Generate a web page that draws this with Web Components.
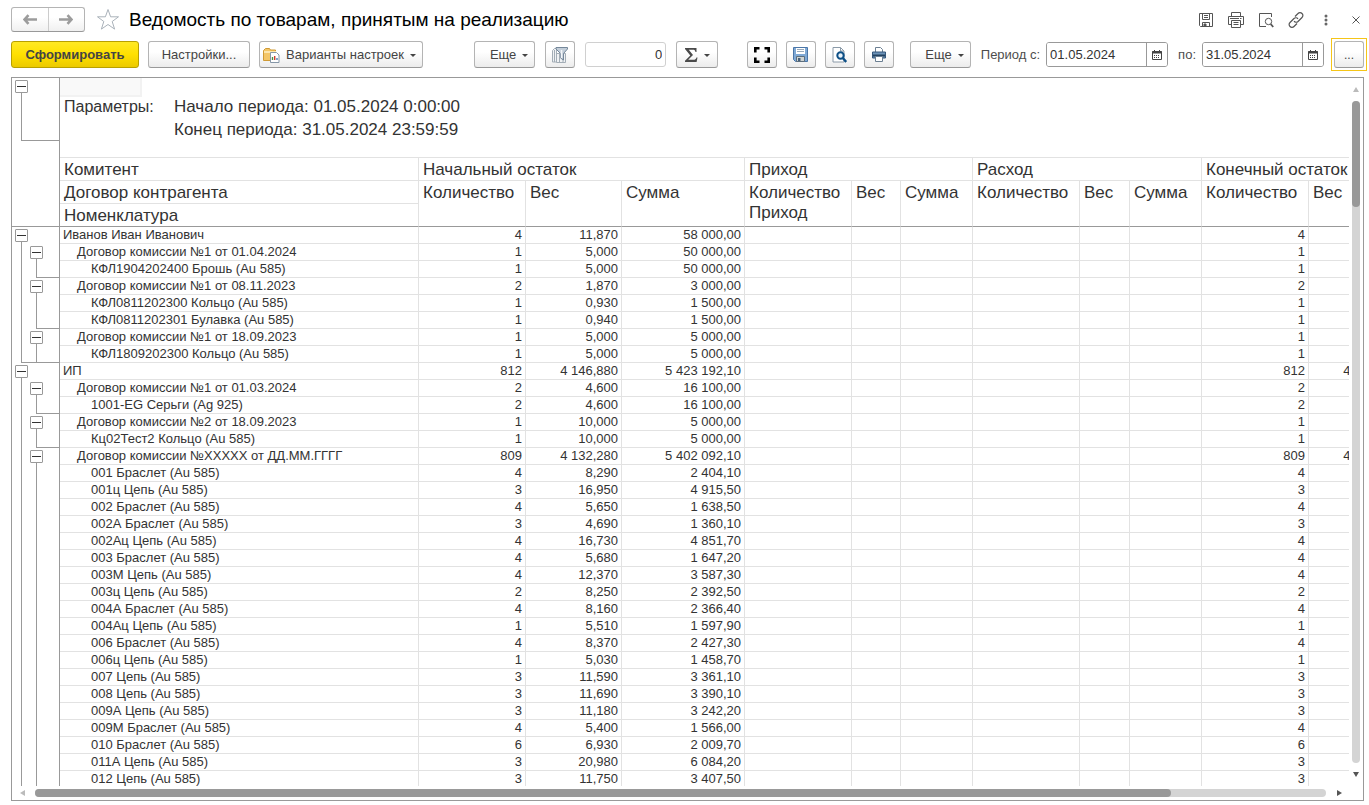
<!DOCTYPE html>
<html lang="ru">
<head>
<meta charset="utf-8">
<title>Ведомость по товарам, принятым на реализацию</title>
<style>
  html, body { margin: 0; height: 100%; background: #fff; }
  body { font: 13px/16px "Liberation Sans", Arial, sans-serif; color: #333; overflow: hidden; }
</style>
</head>
<body>
<report-app></report-app>

<script>
const ICONS = {
  back: '<svg width="14" height="11" viewBox="0 0 14 11"><path d="M5.500 1.200 1.500 5.500l4 4.300M2 5.500H14" fill="none" stroke="#9c9c9c" stroke-width="2.600"/></svg>',
  forward: '<svg width="14" height="11" viewBox="0 0 14 11"><path d="M8.500 1.200l4 4.300-4 4.300M12 5.500H0" fill="none" stroke="#9c9c9c" stroke-width="2.600"/></svg>',
  star: '<svg width="24" height="23" viewBox="0 0 24 23"><path d="M12 1.500l2.600 7.300h7.900l-6.300 4.700 2.400 7.600L12 16.500l-6.600 4.600 2.400-7.600L1.500 8.800h7.900z" fill="#fff" stroke="#aab2ba"/></svg>',
  save: '<svg width="16" height="16" viewBox="0 0 16 16" fill="none" stroke="#555"><path d="M1.500 1.500h13v13h-12l-1-1z"/><path d="M4.500 1.500v6h7v-6M6 3.500h4M6 5.500h4M4.500 14.500v-4h7v4"/><path d="M6 12h2v2H6z" fill="#555"/></svg>',
  print: '<svg width="16" height="16" viewBox="0 0 16 16" fill="none" stroke="#555"><path d="M3.500 4.500v-4h9v4M3.500 12.500h-3v-8h15v8h-3M2 6.500h9M12 6.500h1.500"/><path d="M3.500 8.500h9v7h-9zM5.500 10.500h5M5.500 12.500h5"/></svg>',
  preview: '<svg width="16" height="16" viewBox="0 0 16 16" fill="none" stroke="#555"><path d="M13.500 5V1.500h-12v13H8"/><circle cx="10.500" cy="9.500" r="3.200"/><path d="M12.700 12l2.500 3" stroke-width="1.800"/></svg>',
  link: '<svg width="16" height="16" viewBox="0 0 16 16" fill="none" stroke="#555" stroke-width="1.200"><path d="M7 4.500l3-3a2.700 2.700 0 0 1 4 0 2.700 2.700 0 0 1 0 4l-4 4a2.700 2.700 0 0 1-4-.3"/><path d="M9 11.500l-3 3a2.700 2.700 0 0 1-4 0 2.700 2.700 0 0 1 0-4l4-4a2.700 2.700 0 0 1 4 .3"/></svg>',
  more: '<svg width="4" height="12" viewBox="0 0 4 12" fill="#666"><circle cx="2" cy="2" r="1.500"/><circle cx="2" cy="6" r="1.500"/><circle cx="2" cy="10" r="1.500"/></svg>',
  close: '<svg width="8" height="8" viewBox="0 0 8 8"><path d="M.5.5l7 7M7.500.5l-7 7" stroke="#555"/></svg>',
  variants: '<svg width="17" height="16" viewBox="0 0 17 16"><path d="M.5 13.500v-10l2-2h4l1 1.500h5v10.500z" fill="#f4c667" stroke="#cf9a35"/><path d="M1 5h12" stroke="#fce6ae" stroke-width="2"/><path d="M7.500 5.500h6l2.500 2.500v7.500H7.500z" fill="#fff" stroke="#8697a8"/><path d="M9.500 13v-3" stroke="#4a8f3e" stroke-width="1.400"/><path d="M11.700 13V9" stroke="#d13b2b" stroke-width="1.400"/><path d="M14 13v-2" stroke="#4a78b5" stroke-width="1.400"/></svg>',
  filter: '<svg width="16" height="16" viewBox="0 0 16 16"><path d="M.5 3.500l2-2h2v13.500h-4zM4.500 6.500h9v9h-9zM7.500 7v8M11 7v8M2.500 3v12" fill="#f0f2f4" stroke="#a3adb6"/><path d="M4 .5h11.500v1.500l-4 4.500v6.500l-3-2V6.500L4 2z" fill="#c3ced9" stroke="#74879a"/><path d="M9.500 3v8" stroke="#f4f7fa" stroke-width="1.500"/></svg>',
  sigma: '<svg width="13" height="14" viewBox="0 0 13 14"><path d="M0 0h11.500v4h-1c-.3-1.700-.9-2.300-2.800-2.300H3.800L8 7l-4.800 4.800h5c2 0 2.800-.7 3.300-2.300h1L11.600 14H0v-1.200L5.300 7.400 0 1z" fill="#4a4a4a"/></svg>',
  expand: '<svg width="16" height="16" viewBox="0 0 16 16"><path d="M1.300 5.500V1.300h4.200M10.500 1.300h4.200v4.200M14.700 10.500v4.200h-4.200M5.500 14.700H1.300v-4.200" fill="none" stroke="#000" stroke-width="2.600"/></svg>',
  disk: '<svg width="15" height="15" viewBox="0 0 15 15"><path d="M.5.5h14v14h-12l-2-2z" fill="#7fa9d6" stroke="#4a76a8"/><path d="M3 1h9v6H3z" fill="#fff"/><path d="M4 2.500h7M4 4.500h7" stroke="#9ab"/><path d="M3.500 9.500h8v5h-8z" fill="#cfd3d2" stroke="#5c6e7d"/><path d="M5 11h2.500v3H5z" fill="#47617c"/></svg>',
  lens: '<svg width="15" height="16" viewBox="0 0 15 16"><path d="M1 .5h7.500L12 4v11H1z" fill="#fff" stroke="#8b9aa8"/><path d="M8.500.5V4H12" fill="none" stroke="#8b9aa8"/><circle cx="8.500" cy="8.500" r="3.200" fill="#e8f2fa" stroke="#0d4f86" stroke-width="2"/><path d="M10.800 11l3.400 4" stroke="#0d4f86" stroke-width="2.400"/></svg>',
  printer: '<svg width="14" height="15" viewBox="0 0 14 15"><path d="M3.500 5V.5h5l2 2V5" fill="#fff" stroke="#6b7f92"/><path d="M.5 5h13v6H.5z" fill="#6d93b8" stroke="#34567a"/><path d="M1 8.500h12" stroke="#23415f" stroke-width="2"/><path d="M3.500 9.500h7v5h-7z" fill="#fff" stroke="#6b7f92"/></svg>',
  calendar: '<svg width="10" height="10" viewBox="0 0 10 10"><path d="M.5 1.500h9v8h-9z" fill="#fff" stroke="#444"/><path d="M0 2.500h10" stroke="#444" stroke-width="2"/><path d="M2.500 0v2M7.500 0v2" stroke="#444"/><path d="M2 5.500h6M2 7.500h6" stroke="#444" stroke-dasharray="1 1"/></svg>'
};

function define(name, css, html) {
  customElements.define(name, class extends HTMLElement {
    constructor() {
      super();
      this.attachShadow({ mode: 'open' }).innerHTML =
        '<style>*{box-sizing:border-box}' + css + '</style>' +
        (typeof html === 'function' ? html(this) : html);
    }
  });
}

/* Icon picked by name from the set above */
define('ui-icon', ':host{display:inline-flex;flex:none}svg{display:block}',
  el => ICONS[el.getAttribute('name')] || '');

/* Push button; "caret" adds the drop-down mark, "primary" the yellow fill */
define('tool-button', `
  :host { display: block; flex: none; height: 27px; width: 30px; }
  button { display: flex; align-items: center; justify-content: center; width: 100%; height: 100%; margin: 0; padding: 0;
    font: inherit; color: #444; background: linear-gradient(#fff 40%, #ececec); border: 1px solid #b4b4b4;
    border-bottom-color: #999; border-radius: 3px; white-space: nowrap; }
  :host([primary]) button { font-weight: bold; background: linear-gradient(#ffe924, #ffe000 50%, #ecca00); border-color: #b8a000; }
  :host([caret]) button { gap: 6px; }
  :host([wide]) button { justify-content: flex-end; padding-right: 6px; }
  .caret { border: 3px solid transparent; border-top-color: #444; border-bottom: 0; margin-top: 2px; }
`, el => `<button type="button" aria-label="${el.getAttribute('label') || ''}"><slot></slot>${el.hasAttribute('caret') ? '<span class="caret"></span>' : ''}</button>`
    .replace(' aria-label=""', ''));

/* Labelled date box with a calendar button */
define('date-field', `
  :host { display: flex; align-items: center; flex: none; gap: 6px; white-space: nowrap; color: #4d4d4d; }
  .box { display: flex; width: 122px; height: 25px; border: 1px solid #999; border-radius: 3px; overflow: hidden; }
  input { flex: 1; min-width: 0; border: 0; padding: 0 3px; font: inherit; color: #333; background: #fff; outline: 0; }
  button { width: 21px; border: 0; border-left: 1px solid #999; background: #fff; padding: 0; display: flex; align-items: center; justify-content: center; }
`, el => `<label for="d">${el.getAttribute('label')}</label>
  <div class="box"><input id="d" type="text" value="${el.getAttribute('value')}"><button type="button" aria-label="Календарь"><ui-icon name="calendar"></ui-icon></button></div>`);

define('title-bar', `
  :host { display: flex; align-items: center; height: 25px; }
  .nav { display: flex; width: 74px; height: 25px; border: 1px solid #b4b4b4; border-bottom-color: #999; border-radius: 3px; background: linear-gradient(#fff 40%, #f0f0f0); }
  .nav button { flex: 1; border: 0; background: none; padding: 0; display: flex; align-items: center; justify-content: center; }
  .nav button + button { border-left: 1px solid #ccc; }
  .icon { border: 0; background: none; padding: 0; display: flex; align-items: center; justify-content: center; width: 30px; height: 24px; }
  .star { width: 24px; margin: 0 9px 0 11px; }
  h1 { flex: 1; margin: 0; font-size: 19px; line-height: 24px; font-weight: normal; color: #000; white-space: nowrap; }
  .tools { display: flex; margin-right: -7px; }
`, `<div class="nav"><button type="button" aria-label="Назад"><ui-icon name="back"></ui-icon></button><button type="button" aria-label="Вперед"><ui-icon name="forward"></ui-icon></button></div>
  <button type="button" class="icon star" aria-label="Избранное"><ui-icon name="star"></ui-icon></button>
  <h1><slot></slot></h1>
  <div class="tools">${[['save', 'Сохранить'], ['print', 'Печать'], ['preview', 'Просмотр'], ['link', 'Ссылка'], ['more', 'Меню'], ['close', 'Закрыть']]
    .map(([n, l]) => `<button type="button" class="icon" aria-label="${l}"><ui-icon name="${n}"></ui-icon></button>`).join('')}</div>`);

define('report-toolbar', `
  :host { display: flex; align-items: center; height: 33px; margin-right: -3px; }
  .group { display: flex; align-items: center; gap: 9px; flex: none; }
  .mid { gap: 10px; }
  .s1 { flex: 52 0 0; } .s2 { flex: 29 0 0; } .s3 { flex: 16 0 0; }
  .make { width: 128px; } .set { width: 102px; } .var { width: 164px; } .more { width: 61px; } .sum { width: 42px; }
  input { width: 81px; height: 25px; border: 1px solid #d0d0d0; border-radius: 3px; padding: 0 3px; text-align: right; font: inherit; color: #333; }
  .focus { padding: 2px; border: 1px solid #f5c518; margin-left: -3px; }
  .focus tool-button { font-size: 12px; }
`, `<div class="group">
    <tool-button class="make" primary>Сформировать</tool-button>
    <tool-button class="set">Настройки...</tool-button>
    <tool-button class="var" caret wide><ui-icon name="variants"></ui-icon>Варианты настроек</tool-button>
  </div>
  <div class="s1"></div>
  <div class="group mid">
    <tool-button class="more" caret wide>Еще</tool-button>
    <tool-button label="Отбор"><ui-icon name="filter"></ui-icon></tool-button>
    <input type="text" value="0" aria-label="Значение">
    <tool-button class="sum" caret label="Сумма"><ui-icon name="sigma"></ui-icon></tool-button>
  </div>
  <div class="s2"></div>
  <div class="group">
    <tool-button label="Во весь экран"><ui-icon name="expand"></ui-icon></tool-button>
    <tool-button label="Сохранить"><ui-icon name="disk"></ui-icon></tool-button>
    <tool-button label="Предпросмотр"><ui-icon name="lens"></ui-icon></tool-button>
    <tool-button label="Печать"><ui-icon name="printer"></ui-icon></tool-button>
  </div>
  <div class="s3"></div>
  <div class="group mid">
    <tool-button class="more" caret wide>Еще</tool-button>
    <date-field label="Период с:" value="01.05.2024"></date-field>
    <date-field label="по:" value="31.05.2024"></date-field>
    <div class="focus"><tool-button>...</tool-button></div>
  </div>`);

/* Scroll bar with end arrows; "vertical" turns it */
define('scroll-bar', `
  :host { display: flex; align-items: center; padding: 0 21px 0 8px; height: 13px; }
  .track { flex: 1; height: 8px; border-radius: 4px; background: #d4d4d4; margin: 0 11px 0 10px; }
  .thumb { width: 88%; height: 8px; border-radius: 4px; background: #999; }
  .a { border: 3px solid transparent; border-left: 0; border-right: 5px solid #bbb; }
  .b { border: 3px solid transparent; border-right: 0; border-left: 5px solid #555; }
  :host([vertical]) { flex-direction: column; width: 14px; height: auto; padding: 9px 0 9px; }
  :host([vertical]) .track { width: 8px; height: auto; margin: 9px 0; }
  :host([vertical]) .thumb { width: 8px; height: 16%; }
  :host([vertical]) .a { border: 3px solid transparent; border-top: 0; border-bottom: 5px solid #bbb; }
  :host([vertical]) .b { border: 3px solid transparent; border-bottom: 0; border-top: 5px solid #555; }
`, '<span class="a"></span><div class="track"><div class="thumb"></div></div><span class="b"></span>');

/* level | name | quantity | weight | sum | outline marks: b = box, l = line, e = end of group, - = nothing */
const ROWS = `0|Иванов Иван Иванович|4|11,870|58 000,00|b-
1|Договор комиссии №1 от 01.04.2024|1|5,000|50 000,00|lb
2|КФЛ1904202400 Брошь (Au 585)|1|5,000|50 000,00|le
1|Договор комиссии №1 от 08.11.2023|2|1,870|3 000,00|lb
2|КФЛ0811202300 Кольцо (Au 585)|1|0,930|1 500,00|ll
2|КФЛ0811202301 Булавка (Au 585)|1|0,940|1 500,00|le
1|Договор комиссии №1 от 18.09.2023|1|5,000|5 000,00|lb
2|КФЛ1809202300 Кольцо (Au 585)|1|5,000|5 000,00|ee
0|ИП|812|4 146,880|5 423 192,10|b-
1|Договор комиссии №1 от 01.03.2024|2|4,600|16 100,00|lb
2|1001-EG Серьги (Ag 925)|2|4,600|16 100,00|le
1|Договор комиссии №2 от 18.09.2023|1|10,000|5 000,00|lb
2|Кц02Тест2 Кольцо (Au 585)|1|10,000|5 000,00|le
1|Договор комиссии №XXXXX от ДД.ММ.ГГГГ|809|4 132,280|5 402 092,10|lb
2|001 Браслет (Au 585)|4|8,290|2 404,10|ll
2|001ц Цепь (Au 585)|3|16,950|4 915,50|ll
2|002 Браслет (Au 585)|4|5,650|1 638,50|ll
2|002А Браслет (Au 585)|3|4,690|1 360,10|ll
2|002Ац Цепь (Au 585)|4|16,730|4 851,70|ll
2|003 Браслет (Au 585)|4|5,680|1 647,20|ll
2|003М Цепь (Au 585)|4|12,370|3 587,30|ll
2|003ц Цепь (Au 585)|2|8,250|2 392,50|ll
2|004А Браслет (Au 585)|4|8,160|2 366,40|ll
2|004Ац Цепь (Au 585)|1|5,510|1 597,90|ll
2|006 Браслет (Au 585)|4|8,370|2 427,30|ll
2|006ц Цепь (Au 585)|1|5,030|1 458,70|ll
2|007 Цепь (Au 585)|3|11,590|3 361,10|ll
2|008 Цепь (Au 585)|3|11,690|3 390,10|ll
2|009А Цепь (Au 585)|3|11,180|3 242,20|ll
2|009М Браслет (Au 585)|4|5,400|1 566,00|ll
2|010 Браслет (Au 585)|6|6,930|2 009,70|ll
2|011А Цепь (Au 585)|3|20,980|6 084,20|ll
2|012 Цепь (Au 585)|3|11,750|3 407,50|ll`.split('\n').map(r => r.split('|'));

/* Grouping marks in the left margin of a row */
define('outline-marks', `
  :host { display: flex; height: 100%; padding-left: 3px; }
  span { display: flex; flex-direction: column; width: 15px; flex: none; }
  button { width: 13px; height: 13px; flex: none; margin: 2px 0 0; padding: 0; border: 1px solid #999; border-radius: 1px; background: #fff; display: flex; align-items: center; justify-content: center; }
  button::before { content: ""; width: 9px; height: 1px; background: #333; }
  i { flex: 1; margin-left: 6px; border-left: 1px solid #999; }
  .e { border-bottom: 1px solid #999; width: 38px; }
  span + span .e { width: 23px; }
`, el => [...el.getAttribute('marks')].map(m => '<span>' + ({
    b: '<button type="button" aria-label="Свернуть"></button><i></i>', l: '<i></i>', e: '<i class="e"></i>', '-': '' })[m] + '</span>').join(''));

const WIDTHS = [48, 359, 107, 96, 123, 107, 49, 72, 107, 50, 72, 107, 96];
const mark = m => `<td class="g"><outline-marks marks="${m}"></outline-marks></td>`;
const row = ([lv, name, q, w, s, m]) => `<tr>${mark(m)}<td class="n${lv}">${name}</td>` +
  `<td>${q}</td><td>${w}</td><td>${s}</td>${'<td></td>'.repeat(6)}<td>${q}</td><td>${w.length > 7 ? w : ''}</td></tr>`;

define('report-table', `
  :host { display: block; overflow: hidden; min-width: 0; min-height: 0; }
  table { table-layout: fixed; border-collapse: separate; border-spacing: 0; width: ${WIDTHS.reduce((a, b) => a + b)}px; }
  td, th { padding: 0 3px; overflow: hidden; white-space: nowrap; font-weight: normal; border: 0 solid #e2e2e2; }
  tr { height: 17px; }
  .g { padding: 0; border-right: 1px solid #999; height: 17px; overflow: visible; }
  tbody td { height: 17px; line-height: 16px; border-width: 0 1px 1px 0; text-align: right; }
  tbody .g { border-bottom: 0; border-color: #999; }
  tbody .n0, tbody .n1, tbody .n2 { text-align: left; }
  .n1 { padding-left: 17px; }
  .n2 { padding-left: 31px; }
  thead { font-size: 17px; }
  thead td, thead th { text-align: left; vertical-align: top; padding: 0 4px; }
  .big td, .big th { height: 23px; line-height: 20px; padding-top: 2px; }
  thead .g, .big .g { padding: 0; }
  .h th { border-width: 0 1px 1px 0; }
  .rule td { border-bottom: 1px solid #e2e2e2; }
  thead .rule .g { border-bottom: 0; }
  thead .end { border-bottom: 1px solid #999; }
  thead .corner { height: 17px; line-height: 0; overflow: visible; }
  .cell { width: 82px; height: 19px; margin: 0 0 -2px -4px; background: #f9f9f9; border: 2px solid #f2f2f2; border-width: 0 2px 2px 0; }
  .p { display: flex; }
  .p b { width: 110px; font-weight: normal; font-size: 16px; }
`, () => {
  const sub = ['Количество', 'Вес', 'Сумма'];
  const two = [...sub, 'Количество<br>Приход', 'Вес', 'Сумма', ...sub, 'Количество', 'Вес'];
  return `<table><colgroup>${WIDTHS.map(w => `<col style="width:${w}px">`).join('')}</colgroup>
  <thead>
    <tr>${mark('b')}<td class="corner" colspan="12"><div class="cell"></div></td></tr>
    <tr class="big">${mark('l')}<td colspan="12"><div class="p"><b>Параметры:</b><span>Начало периода: 01.05.2024 0:00:00</span></div></td></tr>
    <tr class="big">${mark('e')}<td colspan="12"><div class="p"><b></b><span>Конец периода: 31.05.2024 23:59:59</span></div></td></tr>
    <tr class="rule"><td class="g"></td><td colspan="12"></td></tr>
    <tr class="big h"><td class="g"></td><th>Комитент</th><th colspan="3">Начальный остаток</th><th colspan="3">Приход</th><th colspan="3">Расход</th><th colspan="2">Конечный остаток</th></tr>
    <tr class="big h"><td class="g"></td><th>Договор контрагента</th>${two.map(t => `<th class="end" rowspan="2">${t}</th>`).join('')}</tr>
    <tr class="big h"><td class="g end"></td><th class="end">Номенклатура</th></tr>
  </thead>
  <tbody>${ROWS.map(row).join('')}</tbody></table>`;
});

define('report-app', `
  :host { display: flex; flex-direction: column; height: 100vh; box-sizing: border-box; padding: 7px 5px 4px 11px; }
  title-bar { flex: none; margin-bottom: 6px; }
  report-toolbar { flex: none; margin-bottom: 6px; }
  .frame { flex: 1; min-height: 0; display: grid; grid-template: minmax(0, 1fr) 14px / minmax(0, 1fr) 14px; border: 1px solid #999; }
  .h { grid-column: 1 / -1; }
`, `<title-bar>Ведомость по товарам, принятым на реализацию</title-bar>
  <report-toolbar></report-toolbar>
  <div class="frame"><report-table></report-table><scroll-bar vertical></scroll-bar><scroll-bar class="h"></scroll-bar></div>`);
</script>
</body>
</html>
